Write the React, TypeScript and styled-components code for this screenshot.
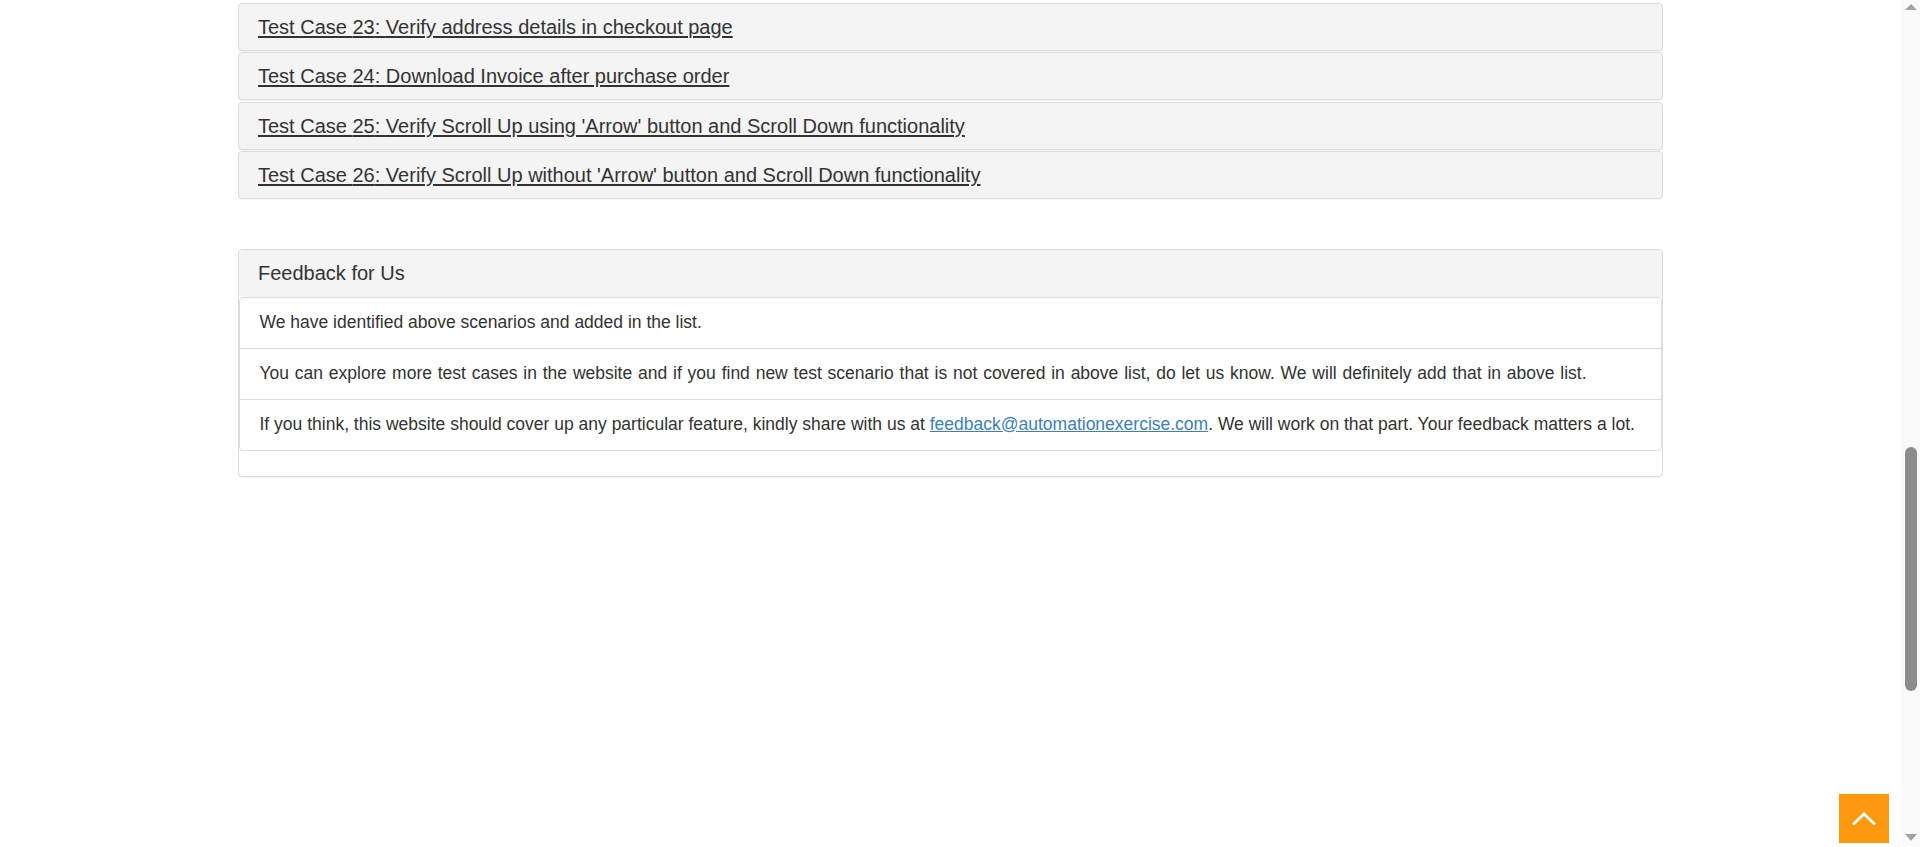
import React from "react";
import styled, { createGlobalStyle } from "styled-components";

const GlobalStyle = createGlobalStyle`
  html, body { height: 100%; }
  body {
    margin: 0;
    background: #ffffff;
    color: #333333;
    font-family: "Liberation Sans", Arial, sans-serif;
    overflow: hidden;
  }
  #root { height: 100%; }
  * { box-sizing: border-box; }
`;

const Frame = styled.div`
  display: flex;
  height: 100vh;
`;

const Page = styled.div`
  flex: 1;
  min-width: 0;
`;

const Container = styled.main`
  width: 1425px;
  margin: 0 auto;
  padding-top: 3px;
`;

const PanelGroup = styled.div`
  display: flex;
  flex-direction: column;
  gap: 1.3px;
`;

const Panel = styled.div`
  border: 1px solid #dddddd;
  border-radius: 4px;
  background: #f4f4f4;
  box-shadow: 0 1px 1px rgba(0, 0, 0, 0.05);
`;

const PanelHeading = styled.div`
  padding: 11px 19px;
  border-radius: 3px 3px 0 0;
`;

const PanelTitle = styled.h4`
  margin: 0;
  font-size: 20px;
  line-height: 24px;
  font-weight: 400;
  color: #333333;
`;

const CaseLink = styled.a`
  color: #333333;
  text-decoration: underline;
  text-underline-offset: 2px;
  cursor: pointer;
`;

const FeedbackPanel = styled.div`
  margin-top: 50.5px;
  border: 1px solid #dddddd;
  border-radius: 4px;
  background: #ffffff;
  padding-bottom: 25px;
  box-shadow: 0 1px 1px rgba(0, 0, 0, 0.05);
`;

const FeedbackHeading = styled.div`
  padding: 12px 19px 11.5px;
  background: #f4f4f4;
  border-radius: 3px 3px 0 0;
  font-size: 20px;
  line-height: 23.5px;
  color: #333333;
`;

const ListGroup = styled.ul`
  list-style: none;
  margin: 0;
  padding: 0;
  border: 1px solid #dddddd;
  border-radius: 4px;
  background: #ffffff;
`;

const ListItem = styled.li<{ $spread?: number }>`
  padding: 13px 19.5px;
  font-size: 17.5px;
  line-height: 23.7px;
  color: #333333;
  white-space: nowrap;
  word-spacing: ${(p) => p.$spread ?? 0}px;
  & + & { border-top: 1px solid #dddddd; }
`;

const MailLink = styled.a`
  color: #3a7fc4;
  text-decoration: underline;
`;

const ScrollTrack = styled.aside`
  width: 19px;
  flex: none;
  background: #fafafa;
  display: flex;
  flex-direction: column;
  align-items: center;
`;

const Arrow = styled.div<{ $down?: boolean }>`
  width: 0;
  height: 0;
  border-left: 6px solid transparent;
  border-right: 6px solid transparent;
  ${(p) =>
    p.$down
      ? "border-top: 7px solid #a3a3a3; margin-top: auto; margin-bottom: 6px;"
      : "border-bottom: 6px solid #a3a3a3; margin-top: 4px;"}
`;

const Thumb = styled.div<{ $offset: number; $size: number }>`
  width: 12px;
  margin-top: ${(p) => p.$offset}px;
  height: ${(p) => p.$size}px;
  border-radius: 6px;
  background: #8c8c8c;
`;

const ScrollUp = styled.a`
  position: fixed;
  right: 31px;
  bottom: 4px;
  width: 50px;
  height: 49px;
  background: #fe980f;
  display: flex;
  align-items: center;
  justify-content: center;
  cursor: pointer;
`;

const cases = [
  { n: 23, title: "Verify address details in checkout page" },
  { n: 24, title: "Download Invoice after purchase order" },
  { n: 25, title: "Verify Scroll Up using 'Arrow' button and Scroll Down functionality" },
  { n: 26, title: "Verify Scroll Up without 'Arrow' button and Scroll Down functionality" },
];

export default function App() {
  return (
    <>
      <GlobalStyle />
      <Frame>
        <Page>
          <Container>
            <PanelGroup>
              {cases.map((c) => (
                <Panel key={c.n}>
                  <PanelHeading>
                    <PanelTitle>
                      <CaseLink>
                        Test Case {c.n}: {c.title}
                      </CaseLink>
                    </PanelTitle>
                  </PanelHeading>
                </Panel>
              ))}
            </PanelGroup>
            <FeedbackPanel>
              <FeedbackHeading>Feedback for Us</FeedbackHeading>
              <ListGroup>
                <ListItem>We have identified above scenarios and added in the list.</ListItem>
                <ListItem $spread={0.95}>
                  You can explore more test cases in the website and if you find new test scenario that is not covered in above list, do let us know. We will definitely add that in above list.
                </ListItem>
                <ListItem>
                  If you think, this website should cover up any particular feature, kindly share with us at{" "}
                  <MailLink href="mailto:feedback@automationexercise.com">feedback@automationexercise.com</MailLink>. We will work on that part. Your feedback matters a lot.
                </ListItem>
              </ListGroup>
            </FeedbackPanel>
          </Container>
        </Page>
        <ScrollTrack aria-hidden="true">
          <Arrow />
          <Thumb $offset={437} $size={244} />
          <Arrow $down />
        </ScrollTrack>
      </Frame>
      <ScrollUp aria-label="Scroll up">
        <svg width="24" height="13" viewBox="0 0 24 13" fill="none">
          <polyline points="2,11.5 12,2 22,11.5" stroke="#ffffff" strokeWidth="2.8" strokeLinecap="square" />
        </svg>
      </ScrollUp>
    </>
  );
}
